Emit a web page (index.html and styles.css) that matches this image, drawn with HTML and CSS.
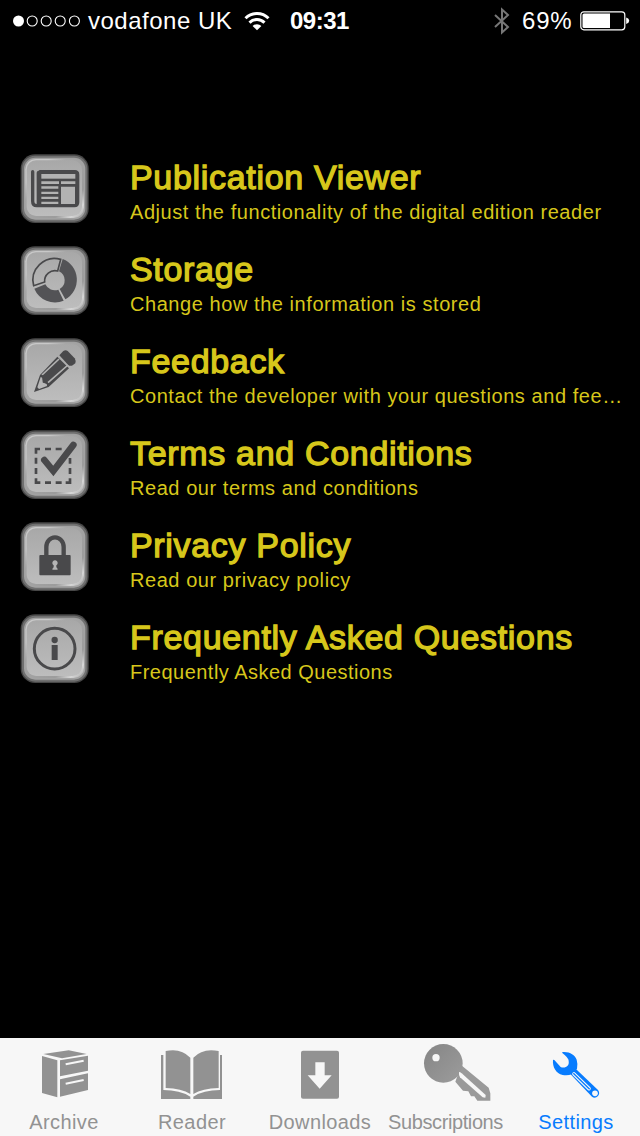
FILE: index.html
```html
<!DOCTYPE html>
<html lang="en">
<head>
    <meta charset="UTF-8">
    <meta name="viewport" content="width=device-width, initial-scale=1.0">
    <title>Settings</title>

    <link rel="stylesheet" href="styles.css">
</head>
<body>

    <!-- Shared button face for the list icons -->
    <svg class="defs" width="0" height="0">
        <defs>
            <linearGradient id="rim" x1="0" y1="0" x2="1" y2="1">
                <stop offset="0" stop-color="#c8c8c8"/>
                <stop offset="0.2" stop-color="#c8c8c8"/>
                <stop offset="0.35" stop-color="#a6a6a6"/>
                <stop offset="0.75" stop-color="#9c9c9c"/>
                <stop offset="0.88" stop-color="#d6d6d6"/>
                <stop offset="1" stop-color="#a8a8a8"/>
            </linearGradient>
            <linearGradient id="face" x1="0" y1="0" x2="0" y2="1">
                <stop offset="0" stop-color="#a8a8a8"/>
                <stop offset="1" stop-color="#bdbdbd"/>
            </linearGradient>
            <linearGradient id="key" x1="0" y1="0" x2="1" y2="1">
                <stop offset="0" stop-color="#858585"/>
                <stop offset="1" stop-color="#9c9c9c"/>
            </linearGradient>
            <symbol id="tile" viewBox="30 27 210 210">
                <rect x="32" y="28" width="204" height="206" rx="43" fill="#474747"/>
                <rect x="36" y="32" width="196" height="198" rx="39" fill="#707070"/>
                <rect x="42" y="38" width="184" height="186" rx="34" fill="#a2a2a2"/>
                <rect x="46" y="42" width="176" height="177" rx="31" fill="url(#rim)"/>
                <rect x="50" y="46" width="166" height="167" rx="28" fill="url(#face)"/>
            </symbol>
        </defs>
    </svg>

    <div class="screen">
        <header class="status-bar">
            <svg class="signal" viewBox="0 0 70 14">
                <circle cx="7.5" cy="7" r="5.5" fill="#fff"/>
                <g fill="none" stroke="#fff" stroke-width="1.1">
                    <circle cx="21.2" cy="7" r="5"/>
                    <circle cx="35.2" cy="7" r="5"/>
                    <circle cx="49.2" cy="7" r="5"/>
                    <circle cx="63.4" cy="7" r="5"/>
                </g>
            </svg>
            <span class="carrier">vodafone UK</span>
            <svg class="wifi" viewBox="0 0 26 20">
                <g fill="none" stroke="#fff" stroke-width="3">
                    <path d="M1.5 7.2a16.3 16.3 0 0 1 23 0"/>
                    <path d="M5.5 11.6a10.6 10.6 0 0 1 15 0"/>
                </g>
                <path d="M8.6 15a6.3 6.3 0 0 1 8.8 0L13 19.3z" fill="#fff"/>
            </svg>
            <span class="time">09:31</span>
            <svg class="bluetooth" viewBox="0 0 18 30">
                <path d="M2 9l13 12-6 5.5V3.5L15 9 2 21" fill="none" stroke="#777" stroke-width="2"/>
            </svg>
            <span class="percent">69%</span>
            <svg class="battery" viewBox="0 0 50 20">
                <rect x="0.8" y="0.8" width="44" height="18" rx="3" fill="none" stroke="#fff" stroke-width="1.2"/>
                <path d="M4 2.5h26v14.5H4a1.5 1.5 0 0 1-1.5-1.5V4A1.5 1.5 0 0 1 4 2.5z" fill="#fff"/>
                <path d="M46.2 6.5q3 1 3 3.3t-3 3.3z" fill="#fff"/>
            </svg>
        </header>

        <main class="settings">
            <div class="row">
                <svg class="row-icon" viewBox="30 27 210 210">
                    <use href="#tile" x="30" y="27" width="210" height="210"/>
                    <path d="M68 80v88q0 14 12 14h113q10 0 10-10V89q0-9-9-9H90" fill="none" stroke="#49494b" stroke-width="10" stroke-linecap="round"/>
                    <path d="M80 84q0-7 8-7h110v105H80z" fill="#49494b"/>
                    <g fill="#b2b2b2">
                        <rect x="94" y="87" width="102" height="14"/>
                        <path d="M94 109h53v8H94zM94 124h51v7H94zM94 140h51v7H94zM94 155h51v7H94zM94 170h51v7H94z"/>
                        <path d="M153 109h43v8h-43zM153 125h42v52h-42z"/>
                    </g>
                </svg>
                <div class="row-text">
                    <h2>Publication Viewer</h2>
                    <p>Adjust the functionality of the digital edition reader</p>
                </div>
            </div>

            <div class="row">
                <svg class="row-icon" viewBox="30 27 210 210">
                    <use href="#tile" x="30" y="27" width="210" height="210"/>
                    <g fill="#535356">
                        <path d="M158 66A67 67 0 0 1 166 187L149 156A30 30 0 0 0 147 103z"/>
                        <path d="M161 191A67 67 0 0 1 73 155L106 142A31 31 0 0 0 145 158z"/>
                    </g>
                    <path d="M71 146A65 65 0 0 1 152 67L143 102A31 31 0 0 0 104 135z" fill="none" stroke="#49494b" stroke-width="5"/>
                </svg>
                <div class="row-text">
                    <h2>Storage</h2>
                    <p>Change how the information is stored</p>
                </div>
            </div>

            <div class="row">
                <svg class="row-icon" viewBox="30 27 210 210">
                    <use href="#tile" x="30" y="27" width="210" height="210"/>
                    <g fill="#49494b">
                        <path d="M148 79l12-13q7-5 13 0l21 22q4 6 2 15l-8 6q-8 4-14-2z"/>
                        <path fill-rule="evenodd" d="M142 83l35 35-61 56-44 15 18-51zM92 144l-10 31 5 5 24-9-1-8-10-2-2-14z"/>
                    </g>
                    <path d="M96 138l51-48M114 161l60-53" stroke="#b2b2b2" stroke-width="5"/>
                    <path d="M92 139l6 2 2 18 13 5 1 7" fill="none" stroke="#49494b" stroke-width="4"/>
                </svg>
                <div class="row-text">
                    <h2>Feedback</h2>
                    <p>Contact the developer with your questions and fee…</p>
                </div>
            </div>

            <div class="row">
                <svg class="row-icon" viewBox="30 27 210 210">
                    <use href="#tile" x="30" y="27" width="210" height="210"/>
                    <g fill="none" stroke="#49494b">
                        <path d="M78 98V84h12M105 84h18M137 84h18M78 110v18M78 141v18M78 172v13h13M105 185h18M137 185h18M167 185h13v-13M180 159v-18M180 128v-17" stroke-width="8"/>
                        <path d="M103 117l27 33 60-78" stroke-width="20" stroke-linecap="round"/>
                    </g>
                </svg>
                <div class="row-text">
                    <h2>Terms and Conditions</h2>
                    <p>Read our terms and conditions</p>
                </div>
            </div>

            <div class="row">
                <svg class="row-icon" viewBox="30 27 210 210">
                    <use href="#tile" x="30" y="27" width="210" height="210"/>
                    <rect x="88" y="126" width="94" height="61" rx="3" fill="#49494b"/>
                    <path d="M109 128v-26a26 29 0 0 1 52 0v26" fill="none" stroke="#49494b" stroke-width="13"/>
                    <path d="M131 157a8 8 0 1 1 8 0v6q4 2 4 7h-16q0-5 4-7z" fill="#b5b5b5"/>
                </svg>
                <div class="row-text">
                    <h2>Privacy Policy</h2>
                    <p>Read our privacy policy</p>
                </div>
            </div>

            <div class="row">
                <svg class="row-icon" viewBox="30 27 210 210">
                    <use href="#tile" x="30" y="27" width="210" height="210"/>
                    <circle cx="134" cy="131" r="61" fill="none" stroke="#49494b" stroke-width="9"/>
                    <circle cx="134" cy="105" r="9.5" fill="#49494b"/>
                    <path d="M125 120h18v45h-18z" fill="#49494b"/>
                </svg>
                <div class="row-text">
                    <h2>Frequently Asked Questions</h2>
                    <p class="narrow">Frequently Asked Questions</p>
                </div>
            </div>
        </main>

        <nav class="tab-bar">
            <a class="tab">
                <svg class="tab-icon" viewBox="54 0 240 186">
                    <g fill="#929292" transform="translate(54 0)">
                        <path d="M58 48l76-11 54 11-74 13z"/>
                        <path d="M54 54l46 13v111l-46-13z"/>
                        <path d="M108 67l84-14v45l-84 17z"/>
                        <path d="M108 124l84-18v50l-84 20z"/>
                    </g>
                    <path d="M179 79l54-11M179 137l54-11" stroke="#f7f7f7" stroke-width="6"/>
                </svg>
                <span>Archive</span>
            </a>
            <a class="tab">
                <svg class="tab-icon" viewBox="372 0 240 186">
                    <g fill="#929292">
                        <path d="M413 39q46-10 74 20v109q-26-16-74-18z"/>
                        <path d="M572 39q-48-10-76 20v109q27-16 76-18z"/>
                        <path d="M399 51h7v105q50 0 81 20v7h-88z"/>
                        <path d="M582 51h-6v105q-50 0-80 20v7h86z"/>
                    </g>
                </svg>
                <span>Reader</span>
            </a>
            <a class="tab">
                <svg class="tab-icon" viewBox="72 0 240 186">
                    <rect x="135" y="38" width="114" height="144" rx="6" fill="#929292"/>
                    <path d="M178 73h28v39h21l-36 40-36-40h23z" fill="#f7f7f7"/>
                </svg>
                <span>Downloads</span>
            </a>
            <a class="tab">
                <svg class="tab-icon" viewBox="456 0 240 186">
                    <path d="M616 82l82 67 5 17v22h-39l-9-13h-10l-8-15-16-2-23-27z" fill="#9a9a9a"/>
                    <circle cx="562" cy="76" r="58" fill="url(#key)"/>
                    <circle cx="540" cy="59" r="11" fill="#f7f7f7"/>
                    <path d="M609 102q3 0 8 4l72 65-1 8-8-1-68-60q-4-6-3-16z" fill="#f7f7f7"/>
                </svg>
                <span class="tight">Subscriptions</span>
            </a>
            <a class="tab active">
                <svg class="tab-icon" viewBox="108 0 240 186">
                    <g fill="#087cfe">
                        <path d="M187 42C209 40 224 50 230 65Q234 78 231 92L216 108Q204 114 188 111C168 105 157 88 159 65L163 66L182 87Q190 91 199 86Q208 81 206 68Q206 60 187 45z"/>
                        <path d="M211 108l16-16 67 64q7 9 0 18-9 9-18 2z"/>
                    </g>
                    <path d="M222 108l45 44" stroke="#f7f7f7" stroke-width="11" stroke-linecap="round"/>
                    <path d="M220 106l49 48" stroke="#087cfe" stroke-width="4"/>
                    <circle cx="285" cy="166" r="8.5" fill="#f7f7f7"/>
                </svg>
                <span>Settings</span>
            </a>
        </nav>
    </div>

</body>
</html>
```
FILE: styles.css
```css
* {
    box-sizing: border-box;
}

body {
    margin: 0;
    background-color: #000;
    font-family: "Liberation Sans", Arial, sans-serif;
}

.defs {
    display: block;
}

.screen {
    display: flex;
    flex-direction: column;
    width: 640px;
    height: 1136px;
    overflow: hidden;
}

/* Status Bar */
.status-bar {
    display: flex;
    align-items: center;
    height: 40px;
    padding: 1px 10px 0 11px;
    color: white;
    font-size: 24px;
    line-height: 40px;
    white-space: nowrap;
}

.signal {
    width: 70px;
    height: 14px;
    margin-right: 7px;
}

.carrier {
    width: 156px;
    letter-spacing: 0.5px;
}

.wifi {
    width: 26px;
    height: 20px;
    margin-right: 20px;
}

.time {
    width: 60px;
    font-weight: bold;
    letter-spacing: -0.5px;
}

.bluetooth {
    width: 18px;
    height: 30px;
    margin-left: auto;
    margin-right: 11px;
}

.percent {
    width: 58px;
    letter-spacing: 0.8px;
}

.battery {
    width: 50px;
    height: 20px;
}

/* Settings List */
.settings {
    flex: 1;
    padding-top: 102px;
}

.row {
    display: flex;
    height: 92px;
    padding: 12px 12px 0 20px;
}

.row-icon {
    flex: none;
    width: 70px;
    height: 70px;
    margin-right: 40px;
}

.row-text {
    flex: 1;
    color: #d7c71b;
    white-space: nowrap;
}

.row-text h2 {
    margin: 0;
    padding-top: 3px;
    font-size: 34px;
    font-weight: normal;
    line-height: 40px;
    letter-spacing: 0.68px;
    -webkit-text-stroke: 1.3px #d7c71b;
}

.row-text p {
    margin: 0;
    padding-top: 3px;
    font-size: 20px;
    line-height: 24px;
    letter-spacing: 0.56px;
}

.row-text .narrow {
    letter-spacing: 0.48px;
}

/* Tab Bar */
.tab-bar {
    display: flex;
    height: 98px;
    background-color: #f7f7f7;
}

.tab {
    display: flex;
    flex-direction: column;
    align-items: center;
    width: 128px;
    color: #929292;
    font-size: 20px;
    line-height: 24px;
    letter-spacing: 0.4px;
    white-space: nowrap;
}

.tab-icon {
    width: 80px;
    height: 62px;
    margin-bottom: 10px;
    overflow: visible;
}

.tab .tight {
    padding-right: 5px;
    letter-spacing: -0.4px;
}

.tab.active {
    color: #087cfe;
}
```
